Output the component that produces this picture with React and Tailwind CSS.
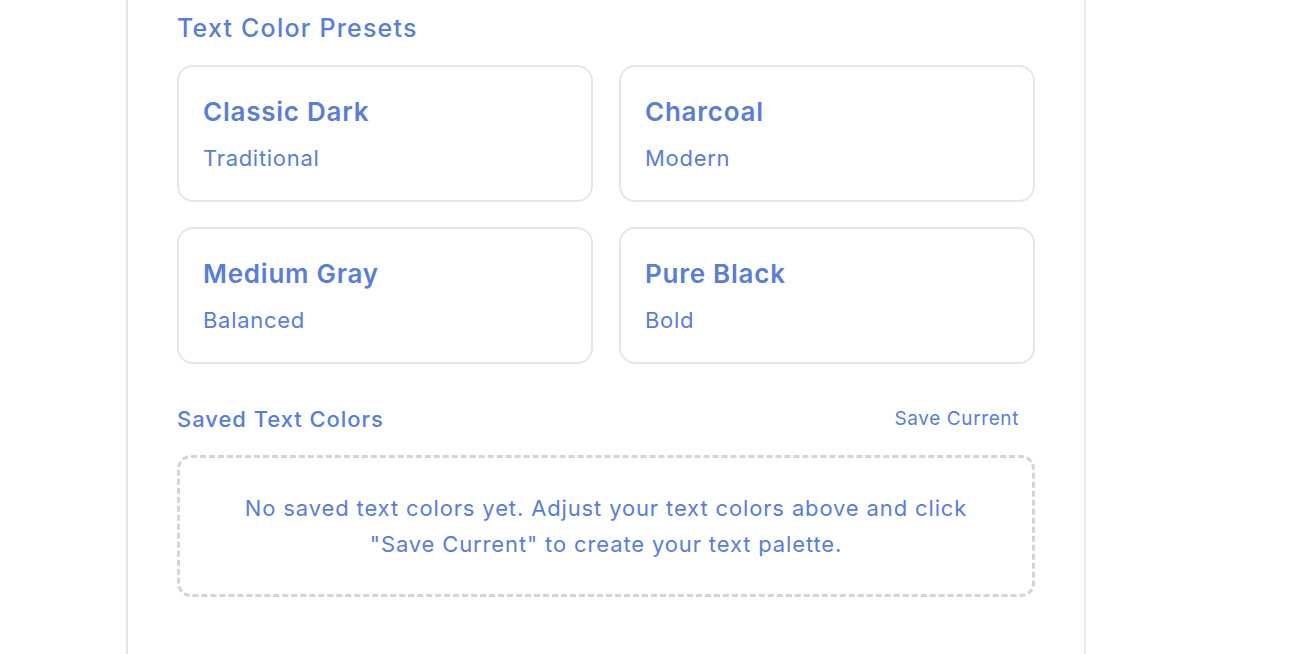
import React from "react";

const presets = [
    { name: "Classic Dark", label: "Traditional" },
    { name: "Charcoal", label: "Modern" },
    { name: "Medium Gray", label: "Balanced" },
    { name: "Pure Black", label: "Bold" },
];

const PresetCard = ({ name, label }) => (
    <button className="h-[137px] rounded-[16px] border-2 border-[#e5e6ec] bg-white pl-[24px] pt-[29px] text-left flex flex-col items-start">
        <span className="text-[26px] leading-[32px] font-semibold tracking-[0.75px]">{name}</span>
        <span className="mt-[16px] text-[22px] leading-[28px] tracking-[0.7px]">{label}</span>
    </button>
);

export default function App() {
    return (
        <div
            className="min-h-screen bg-white text-[#5a7dd8]"
            style={{ fontFamily: "Inter, 'Noto Sans', sans-serif" }}
        >
            <div className="ml-[126px] w-[960px] min-h-[654px] border-x-2 border-[#e6e6eb] px-[49px] pt-[12px]">
                <h2 className="text-[25px] leading-[32px] font-medium tracking-[1.2px]">
                    Text Color Presets
                </h2>
                <div className="mt-[21px] grid grid-cols-2 gap-x-[26px] gap-y-[25px]">
                    {presets.map(preset => (
                        <PresetCard key={preset.name} {...preset} />
                    ))}
                </div>
                <div className="mt-[41px] flex items-center justify-between">
                    <h3 className="text-[22px] leading-[28px] font-medium tracking-[0.95px]">
                        Saved Text Colors
                    </h3>
                    <button className="pr-[16px] text-[19px] leading-[28px] tracking-[0.6px]">
                        Save Current
                    </button>
                </div>
                <div className="mt-[22px] h-[142px] rounded-[14px] border-[3px] border-dashed border-[#d4d5da] flex items-center justify-center text-center">
                    <p className="text-[22px] leading-[36px] tracking-[0.86px]">
                        No saved text colors yet. Adjust your text colors above and click
                        <br />
                        "Save Current" to create your text palette.
                    </p>
                </div>
            </div>
        </div>
    );
}
